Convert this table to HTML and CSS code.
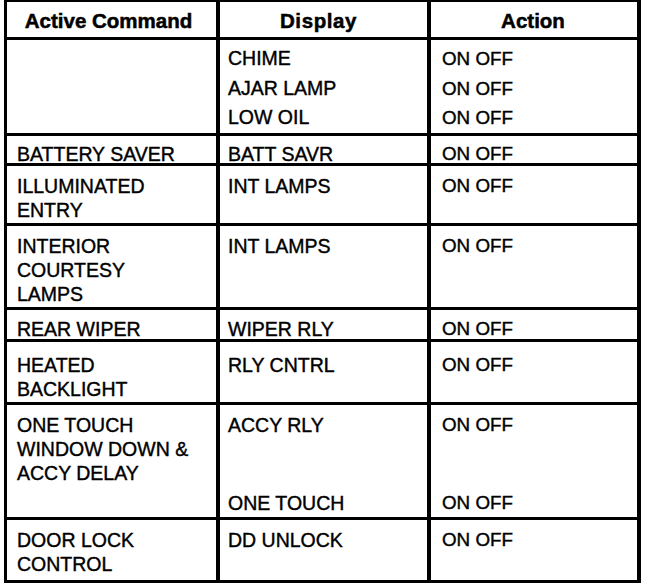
FILE: index.html
```html
<!DOCTYPE html>
<html>
<head>
<meta charset="utf-8">
<link rel="stylesheet" href="styles.css">
</head>
<body>
<div class="sheet">
  <div class="tbl">
    <div class="cell head c1 r-head">Active Command</div>
    <div class="cell head c2 r-head">Display</div>
    <div class="cell head c3 r-head">Action</div>

    <div class="cell c1 r-g1"></div>
    <div class="cell c2 r-g1 spaced"><div>CHIME</div><div>AJAR LAMP</div><div>LOW OIL</div></div>
    <div class="cell c3 r-g1 spaced"><div class="onoff">ON OFF</div><div class="onoff">ON OFF</div><div class="onoff">ON OFF</div></div>

    <div class="cell c1 r-one">BATTERY SAVER</div>
    <div class="cell c2 r-one">BATT SAVR</div>
    <div class="cell c3 r-one onoff">ON OFF</div>

    <div class="cell c1 r-illum">ILLUMINATED<br>ENTRY</div>
    <div class="cell c2 r-illum">INT LAMPS</div>
    <div class="cell c3 r-illum onoff">ON OFF</div>

    <div class="cell c1 r-interior">INTERIOR<br>COURTESY<br>LAMPS</div>
    <div class="cell c2 r-interior">INT LAMPS</div>
    <div class="cell c3 r-interior onoff">ON OFF</div>

    <div class="cell c1 r-rear">REAR WIPER</div>
    <div class="cell c2 r-rear">WIPER RLY</div>
    <div class="cell c3 r-rear onoff">ON OFF</div>

    <div class="cell c1 r-heated">HEATED<br>BACKLIGHT</div>
    <div class="cell c2 r-heated">RLY CNTRL</div>
    <div class="cell c3 r-heated onoff">ON OFF</div>

    <div class="cell c1 r-touch">ONE TOUCH<br>WINDOW DOWN &amp;<br>ACCY DELAY</div>
    <div class="cell c2 r-touch"><div>ACCY RLY</div><div class="later">ONE TOUCH</div></div>
    <div class="cell c3 r-touch onoff"><div>ON OFF</div><div class="later">ON OFF</div></div>

    <div class="cell c1 r-door">DOOR LOCK<br>CONTROL</div>
    <div class="cell c2 r-door">DD UNLOCK</div>
    <div class="cell c3 r-door onoff">ON OFF</div>
  </div>
</div>
</body>
</html>
```

FILE: styles.css
```css
html, body {
  margin: 0;
  padding: 0;
  background: #ffffff;
}

.sheet {
  width: 672px;
  height: 584px;
  padding-left: 4px;
  box-sizing: border-box;
}

.tbl {
  display: grid;
  grid-template-columns: 216px 211px 210px;
  grid-template-rows: 40px 96px 30px 60px 84px 32px 63px 115px 63px;
  width: 637px;
  font-family: "Liberation Sans", Arial, sans-serif;
  font-size: 19.5px;
  line-height: 24px;
  color: #000;
  -webkit-text-stroke: 0.4px #000;
}

.cell {
  box-sizing: border-box;
  border-bottom: 3px solid #000;
  border-right: 4px solid #000;
  padding-top: 8px;
  white-space: nowrap;
}

.c1 {
  border-left: 3px solid #000;
  padding-left: 10px;
}

.c2 {
  padding-left: 8px;
}

.c3 {
  padding-left: 11px;
}

.onoff {
  font-size: 18.8px;
}

.r-one {
  padding-top: 6px;
}

.r-rear {
  padding-top: 7px;
}

.r-heated {
  padding-top: 11px;
}

.r-head {
  border-top: 2px solid #000;
  font-weight: bold;
  font-size: 20.5px;
  text-align: center;
  padding: 7px 0 0 0;
  -webkit-text-stroke: 0.5px #000;
}

.c1.r-head {
  padding-left: 0;
  padding-right: 6px;
}

.c2.r-head {
  padding-right: 10px;
  letter-spacing: 0.6px;
}

.c3.r-head {
  padding-right: 2px;
}

.spaced {
  padding-top: 4px;
  line-height: 29.5px;
}

.later {
  margin-top: 54px;
}
```
